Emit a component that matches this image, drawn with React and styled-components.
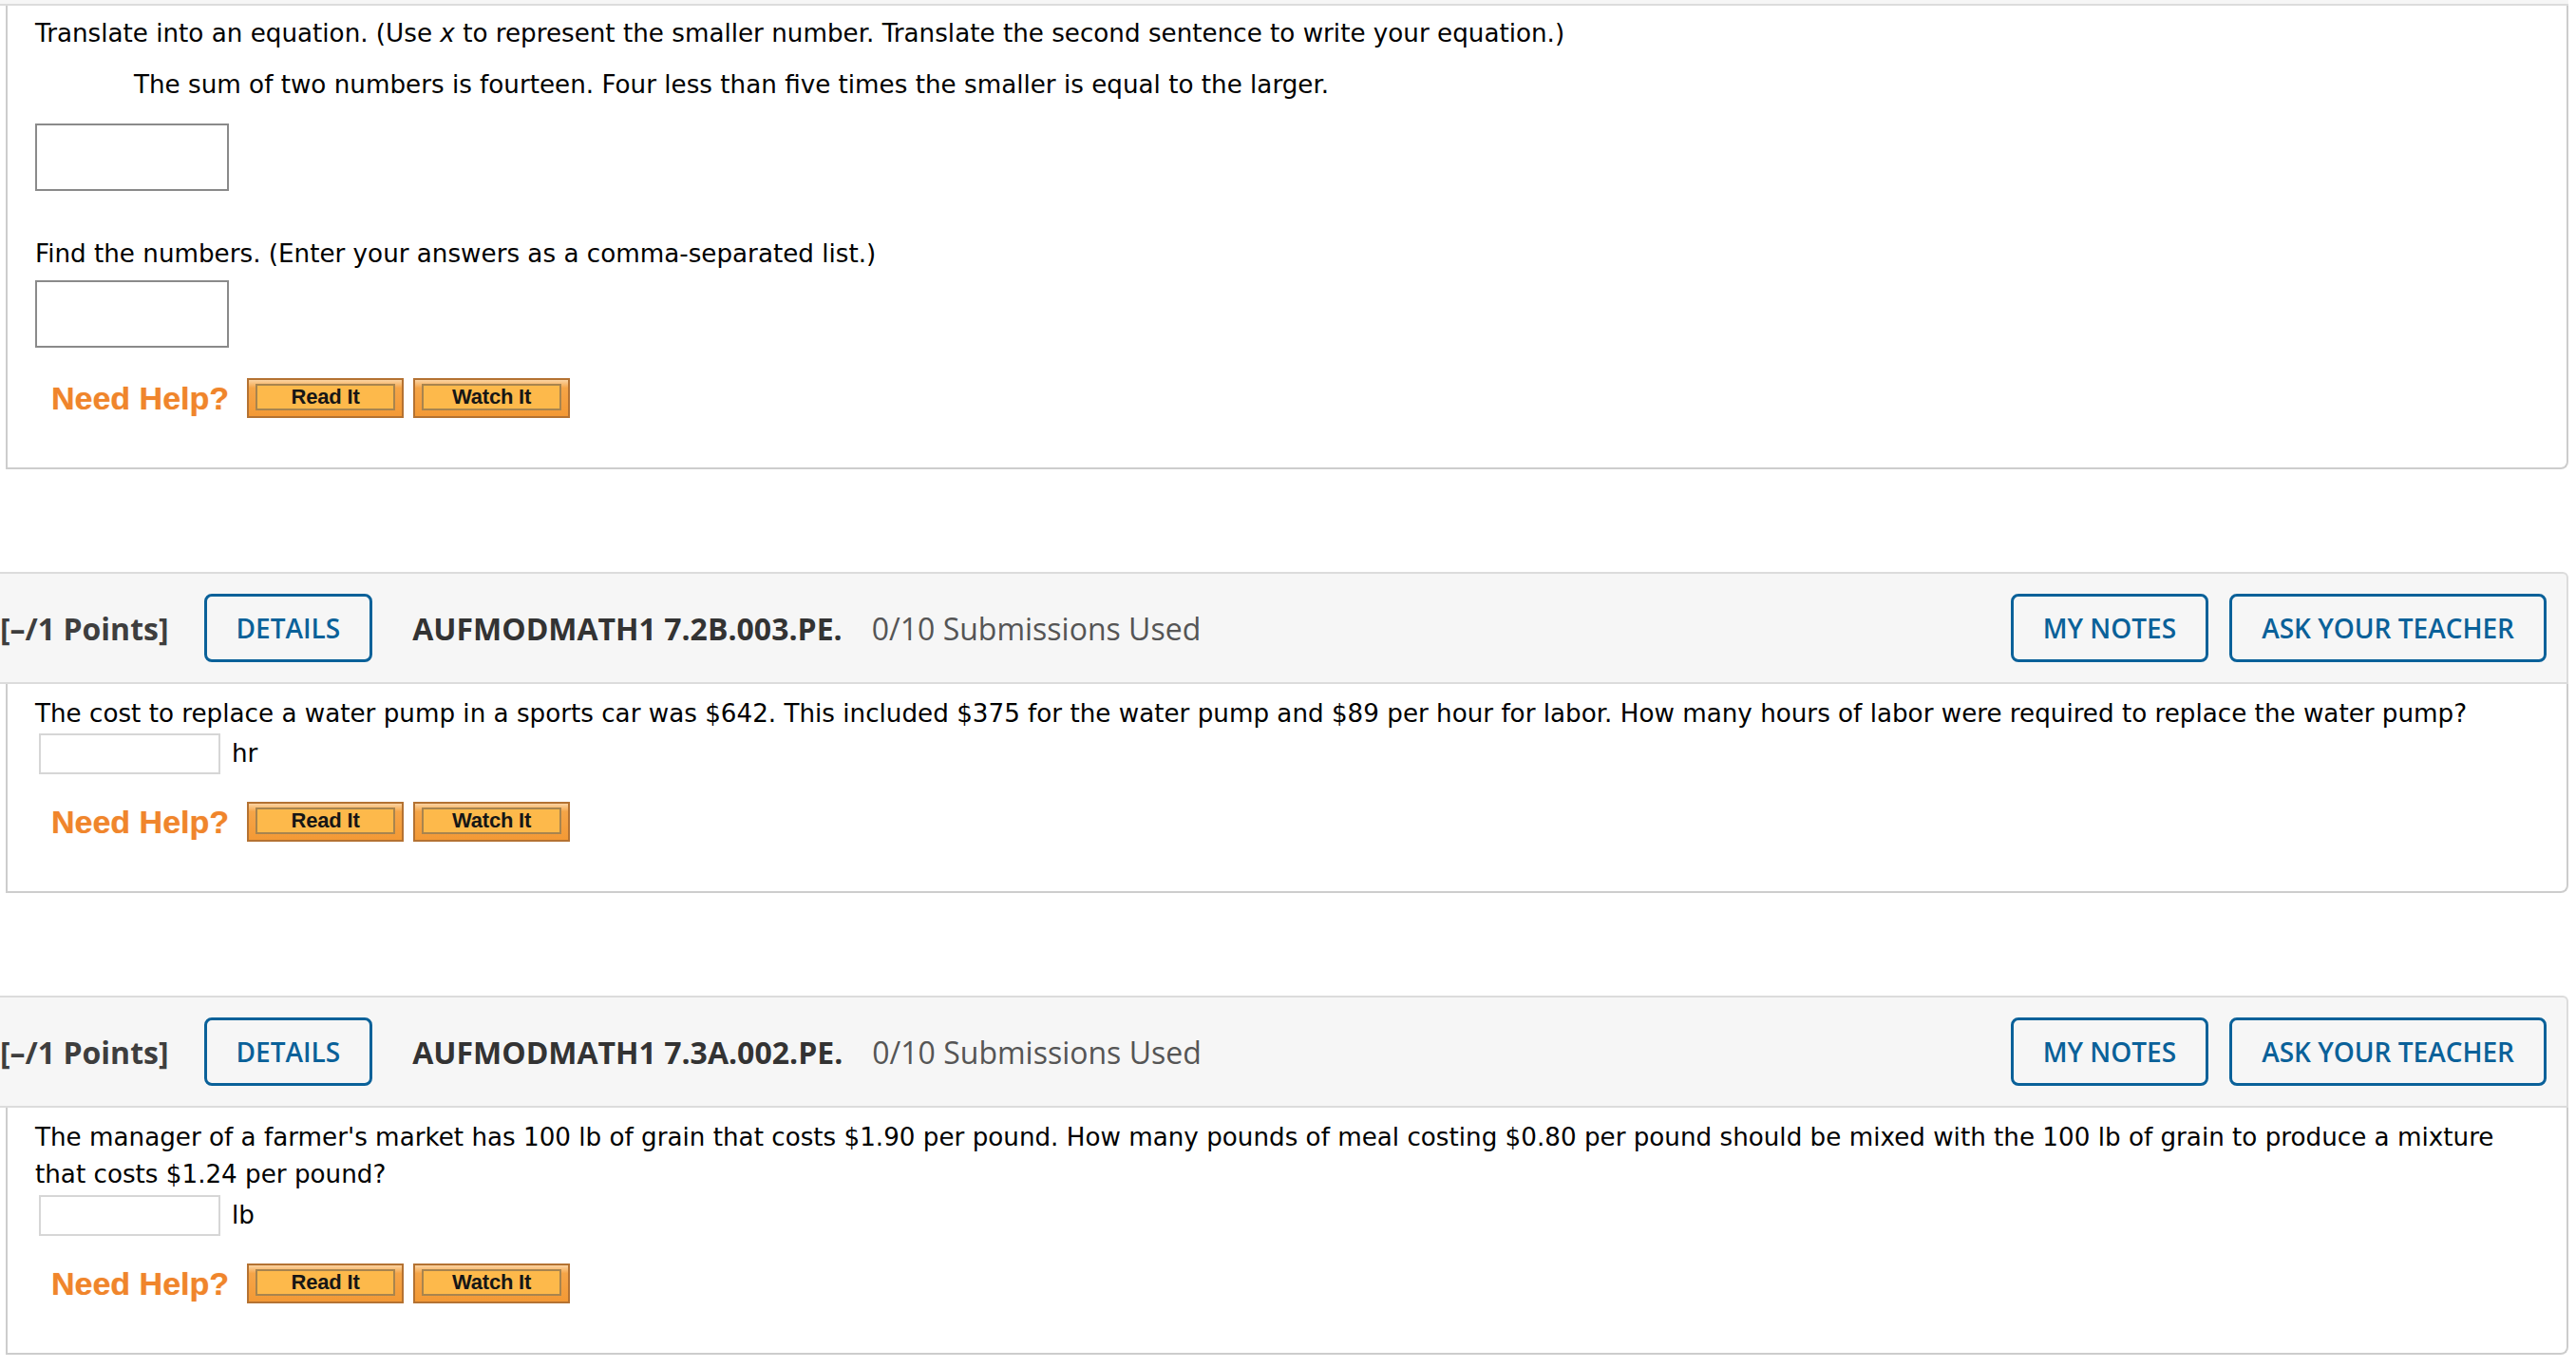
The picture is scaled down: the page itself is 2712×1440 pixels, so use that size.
import React from 'react';
import styled, { createGlobalStyle } from 'styled-components';

const GlobalStyle = createGlobalStyle`
    html, body { margin: 0; padding: 0; background: #fff; }
    body {
        font-family: "DejaVu Sans", Verdana, sans-serif;
        color: #000;
        overflow: hidden;
    }
`;

const Page = styled.div`
    display: flex;
    flex-direction: column;
    width: 2712px;
    padding-right: 8px;
    box-sizing: border-box;
`;

const Question = styled.section`
    display: flex;
    flex-direction: column;
    margin-top: ${(p) => (p.$first ? '0' : '108px')};
`;

const HeaderStub = styled.div`
    height: 4px;
    background: #f6f6f6;
    border-bottom: 2px solid #dcdcdc;
`;

const Header = styled.header`
    display: flex;
    align-items: center;
    background: #f6f6f6;
    border: 2px solid #dcdcdc;
    border-left: none;
    border-radius: 0 6px 0 0;
    padding: 21px 21px 21px 0;
    font-family: "Open Sans", "Liberation Sans", sans-serif;
    font-size: 32px;
    white-space: nowrap;
    overflow: hidden;
`;

const Points = styled.span`
    font-weight: 700;
    color: #3e3e3e;
    margin-right: 37px;
`;

const OutlineButton = styled.button`
    height: 72px;
    box-sizing: border-box;
    padding: 0 31px;
    border: 3px solid #0a6199;
    border-radius: 8px;
    background: transparent;
    color: #0a6199;
    font-family: "Open Sans", "Liberation Sans", sans-serif;
    font-size: 28px;
    font-weight: 600;
    cursor: pointer;
    margin-left: ${(p) => (p.$push ? 'auto' : '0')};
    margin-right: ${(p) => p.$gap || 0}px;
`;

const Code = styled.span`
    font-weight: 700;
    color: #333;
    margin-left: 42px;
    margin-right: 31px;
`;

const Submissions = styled.span`
    color: #555;
`;

const Body = styled.div`
    margin-left: 6px;
    border: 2px solid #cdcdcd;
    border-top: none;
    border-radius: 0 0 8px 0;
    padding: ${(p) => p.$top}px 29px 52px 29px;
    font-size: 26.2px;
    line-height: 39px;
`;

const Prompt = styled.p`
    margin: ${(p) => p.$mt || 0}px 0 0 0;
    padding-left: ${(p) => (p.$indent ? '104px' : '0')};
`;

const AnswerRow = styled.div`
    display: flex;
    align-items: center;
    gap: 12px;
    margin-top: ${(p) => p.$mt}px;
    margin-left: ${(p) => (p.$wide ? '0' : '4px')};
`;

const AnswerBox = styled.input`
    display: block;
    box-sizing: border-box;
    width: ${(p) => (p.$wide ? '204px' : '191px')};
    height: ${(p) => (p.$wide ? '71px' : '43px')};
    margin: 0;
    padding: 0 6px;
    border: 2px solid ${(p) => (p.$wide ? '#8a8a8a' : '#d6d6d6')};
    background: #fff;
    font-size: 24px;
`;

const Unit = styled.span`
    color: #000;
`;

const HelpRow = styled.div`
    display: flex;
    align-items: center;
    margin-top: ${(p) => p.$mt}px;
    padding-left: 17px;
`;

const HelpLabel = styled.span`
    font-family: "Liberation Sans", Arial, sans-serif;
    font-weight: 700;
    font-size: 34px;
    line-height: 1;
    color: #f0852b;
    text-shadow: 0 0 1px rgba(240, 133, 43, 0.6);
    margin-right: 19px;
`;

const ResourceButton = styled.button`
    width: 165px;
    height: 42px;
    box-sizing: border-box;
    padding: 4px 7px 6px;
    margin: 0 10px 0 0;
    border: 2px solid #b47232;
    background: linear-gradient(#fbd3a2 0, #f5a548 22%, #f39935 100%);
    cursor: pointer;
`;

const ResourceFace = styled.span`
    display: flex;
    align-items: center;
    justify-content: center;
    height: 100%;
    box-sizing: border-box;
    border: 2px solid #a8844e;
    background: #fdb94b;
    font-family: "Liberation Sans", Arial, sans-serif;
    font-weight: 700;
    font-size: 22px;
    letter-spacing: -0.2px;
    color: #161616;
`;

const NeedHelp = ({ mt }) => (
    <HelpRow $mt={mt}>
        <HelpLabel>Need Help?</HelpLabel>
        <ResourceButton>
            <ResourceFace>Read It</ResourceFace>
        </ResourceButton>
        <ResourceButton>
            <ResourceFace>Watch It</ResourceFace>
        </ResourceButton>
    </HelpRow>
);

const QuestionHeader = ({ code }) => (
    <Header>
        <Points>[–/1 Points]</Points>
        <OutlineButton>DETAILS</OutlineButton>
        <Code>{code}</Code>
        <Submissions>0/10 Submissions Used</Submissions>
        <OutlineButton $push $gap={22}>MY NOTES</OutlineButton>
        <OutlineButton>ASK YOUR TEACHER</OutlineButton>
    </Header>
);

const App = () => {
    return (
        <>
            <GlobalStyle />
            <Page>
                <Question $first>
                    <HeaderStub />
                    <Body $top={10}>
                        <Prompt>
                            Translate into an equation. (Use <i>x</i> to represent the smaller number. Translate the second sentence to write your equation.)
                        </Prompt>
                        <Prompt $indent $mt={15}>
                            The sum of two numbers is fourteen. Four less than five times the smaller is equal to the larger.
                        </Prompt>
                        <AnswerRow $wide $mt={21}>
                            <AnswerBox $wide type='text' />
                        </AnswerRow>
                        <Prompt $mt={47}>Find the numbers. (Enter your answers as a comma-separated list.)</Prompt>
                        <AnswerRow $wide $mt={8}>
                            <AnswerBox $wide type='text' />
                        </AnswerRow>
                        <NeedHelp mt={32} />
                    </Body>
                </Question>

                <Question>
                    <QuestionHeader code='AUFMODMATH1 7.2B.003.PE.' />
                    <Body $top={12}>
                        <Prompt>
                            The cost to replace a water pump in a sports car was $642. This included $375 for the water pump and $89 per hour for labor. How many hours of labor were required to replace the water pump?
                        </Prompt>
                        <AnswerRow $mt={1}>
                            <AnswerBox type='text' />
                            <Unit>hr</Unit>
                        </AnswerRow>
                        <NeedHelp mt={29} />
                    </Body>
                </Question>

                <Question>
                    <QuestionHeader code='AUFMODMATH1 7.3A.002.PE.' />
                    <Body $top={12}>
                        <Prompt>
                            The manager of a farmer's market has 100 lb of grain that costs $1.90 per pound. How many pounds of meal costing $0.80 per pound should be mixed with the 100 lb of grain to produce a mixture
                            <br />
                            that costs $1.24 per pound?
                        </Prompt>
                        <AnswerRow $mt={2}>
                            <AnswerBox type='text' />
                            <Unit>lb</Unit>
                        </AnswerRow>
                        <NeedHelp mt={29} />
                    </Body>
                </Question>
            </Page>
        </>
    );
};

export default App;
